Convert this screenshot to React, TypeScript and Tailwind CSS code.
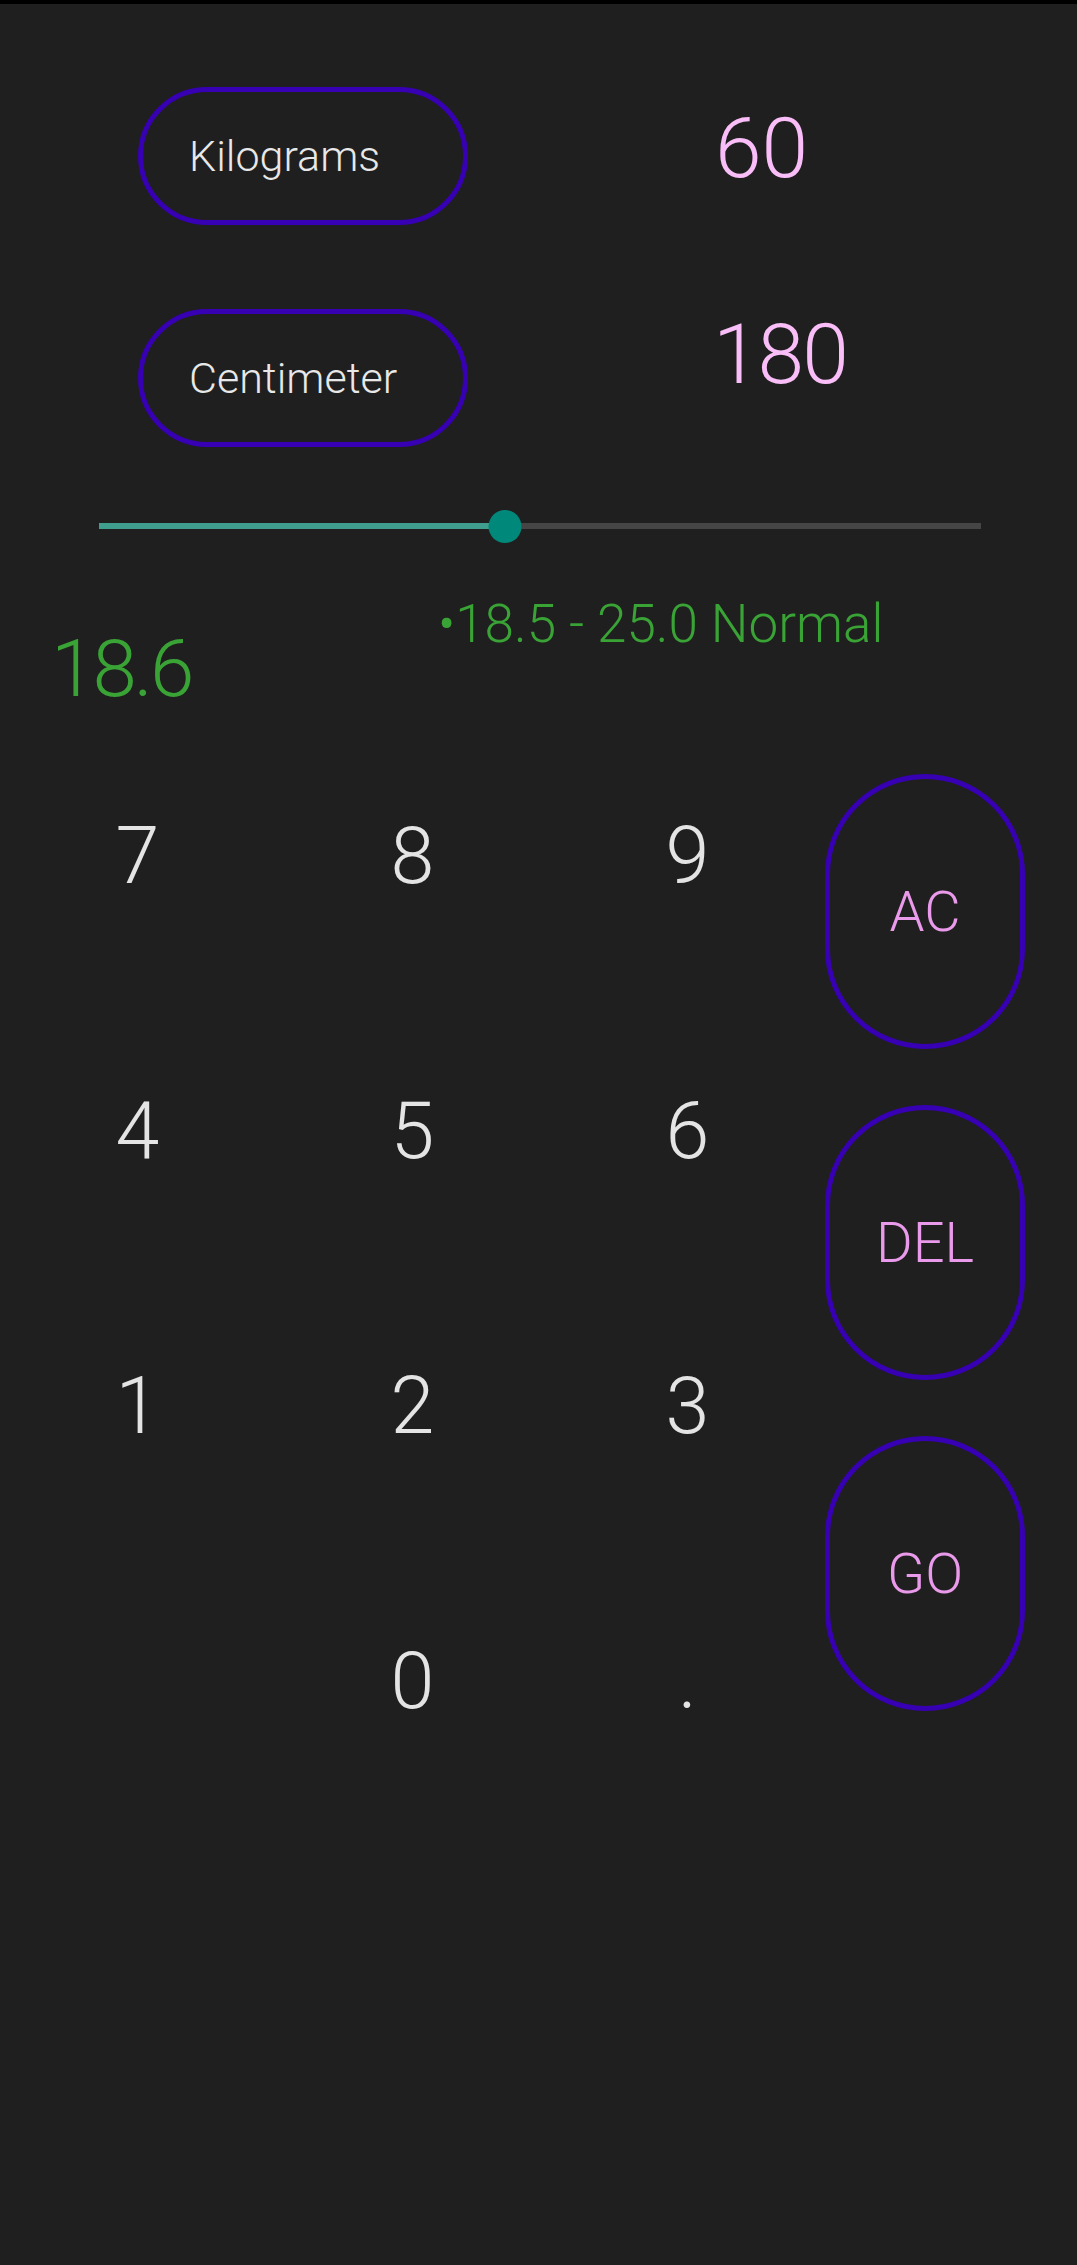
import React from "react";

const keys = ["7", "8", "9", "4", "5", "6", "1", "2", "3", "", "0", "."];

export default function App() {
  const pct = 46;
  return (
    <div
      className="min-h-[2265px] w-[1077px] bg-[#1f1f1f] text-[#e6e6e6]"
      style={{ fontFamily: "Roboto, 'Noto Sans', sans-serif" }}
    >
      <div className="h-[4px] bg-black" />

      {/* Weight row */}
      <div className="mt-[83px] flex items-start pl-[138px]">
        <div className="flex h-[138px] w-[330px] items-center rounded-full border-[5px] border-[#3700b3] pl-[46px]">
          <span className="text-[43px] font-light leading-none text-[#e8e8e8]">Kilograms</span>
        </div>
        <div className="ml-[247px] mt-[20px] text-[84px] font-light leading-none text-[#f9bdf7]">60</div>
      </div>

      {/* Height row */}
      <div className="mt-[84px] flex items-start pl-[138px]">
        <div className="flex h-[138px] w-[330px] items-center rounded-full border-[5px] border-[#3700b3] pl-[46px]">
          <span className="text-[43px] font-light leading-none text-[#e8e8e8]">Centimeter</span>
        </div>
        <div className="ml-[245px] mt-[4px] text-[84px] font-light leading-none tracking-[-2px] text-[#f9bdf7]">180</div>
      </div>

      {/* Slider */}
      <div className="mt-[63px] pl-[99px]">
        <div className="relative h-[33px] w-[882px]">
          <div className="absolute left-0 right-0 top-[13px] h-[6px] bg-[#454545]" />
          <div
            className="absolute left-0 top-[13px] h-[6px] bg-[#3f9e8e]"
            style={{ width: `${pct}%` }}
          />
          <div
            className="absolute top-0 h-[33px] w-[33px] -translate-x-1/2 rounded-full bg-[#00897b]"
            style={{ left: `${pct}%` }}
          />
        </div>
      </div>

      {/* BMI result */}
      <div className="mt-[55px] flex items-start">
        <div className="w-[438px] pl-[51px] pt-[31px]">
          <div className="text-[80px] font-light leading-none tracking-[-3px] text-[#3aa336]">18.6</div>
        </div>
        <div className="text-[53px] font-light leading-none text-[#3aa336]">•18.5 - 25.0 Normal</div>
      </div>

      {/* Keypad */}
      <div className="mt-[10px] flex">
        <div className="grid w-[825px] grid-cols-3">
          {keys.map((k, i) => (
            <div
              key={i}
              className="flex h-[275px] items-center justify-center text-[79px] font-light leading-none text-[#e4e4e4]"
            >
              {k}
            </div>
          ))}
        </div>
        <div className="flex flex-col gap-[56px] pt-[55px]">
          {["AC", "DEL", "GO"].map((b) => (
            <div
              key={b}
              className="flex h-[275px] w-[200px] items-center justify-center rounded-full border-[5px] border-[#3700b3] text-[56px] font-light leading-none text-[#ea9aea]"
            >
              {b}
            </div>
          ))}
        </div>
      </div>
    </div>
  );
}
